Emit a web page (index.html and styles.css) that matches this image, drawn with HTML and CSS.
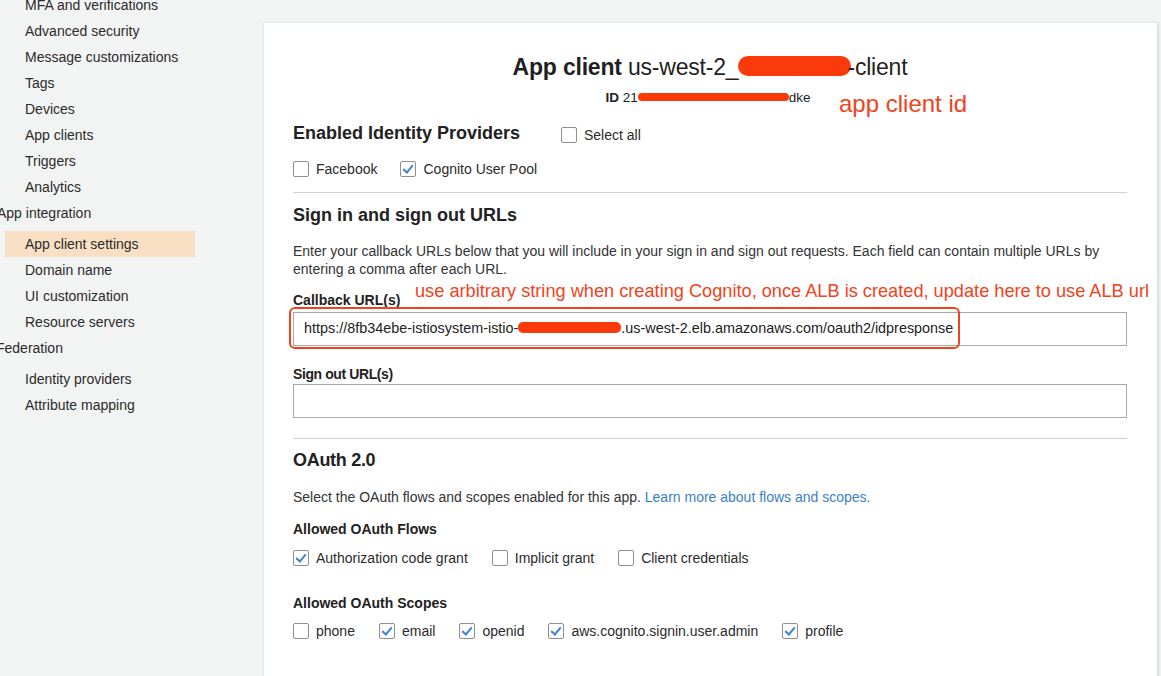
FILE: index.html
```html
<!DOCTYPE html>
<html>
<head>
<meta charset="utf-8">
<link rel="stylesheet" href="styles.css">
</head>
<body>
<div class="page">
  <nav class="sidebar">
    <div class="item">MFA and verifications</div>
    <div class="item">Advanced security</div>
    <div class="item">Message customizations</div>
    <div class="item">Tags</div>
    <div class="item">Devices</div>
    <div class="item">App clients</div>
    <div class="item">Triggers</div>
    <div class="item">Analytics</div>
    <div class="group">App integration</div>
    <div class="item active">App client settings</div>
    <div class="item">Domain name</div>
    <div class="item">UI customization</div>
    <div class="item">Resource servers</div>
    <div class="group fed">Federation</div>
    <div class="item">Identity providers</div>
    <div class="item">Attribute mapping</div>
  </nav>
  <main class="card">
    <h1 class="title"><b>App client</b> us-west-2_<span class="blob title-blob"></span>-client</h1>
    <div class="idline"><b>ID</b> 21<span class="blob id-blob"></span>dke</div>
    <div class="note note-id">app client id</div>

    <div class="providers-head">
      <h2 class="h2">Enabled Identity Providers</h2>
      <label class="cb"><span class="box"></span>Select all</label>
    </div>
    <div class="cbrow">
      <label class="cb"><span class="box"></span>Facebook</label>
      <label class="cb"><span class="box on"></span>Cognito User Pool</label>
    </div>

    <hr class="divider">

    <h2 class="h2 sec">Sign in and sign out URLs</h2>
    <p class="desc">Enter your callback URLs below that you will include in your sign in and sign out requests. Each field can contain multiple URLs by entering a comma after each URL.</p>

    <div class="field first">
      <div class="label">Callback URL(s)</div>
      <div class="note note-cb">use arbitrary string when creating Cognito, once ALB is created, update here to use ALB url</div>
      <div class="input">https://8fb34ebe-istiosystem-istio-<span class="blob url-blob"></span>.us-west-2.elb.amazonaws.com/oauth2/idpresponse</div>
      <div class="ring"></div>
    </div>
    <div class="field second">
      <div class="label narrow">Sign out URL(s)</div>
      <div class="input"></div>
    </div>

    <hr class="divider d2">

    <h2 class="h2 sec2">OAuth 2.0</h2>
    <p class="desc d-oauth">Select the OAuth flows and scopes enabled for this app. <a class="link">Learn more about flows and scopes.</a></p>

    <div class="label sub">Allowed OAuth Flows</div>
    <div class="cbrow flows">
      <label class="cb"><span class="box on"></span>Authorization code grant</label>
      <label class="cb"><span class="box"></span>Implicit grant</label>
      <label class="cb"><span class="box"></span>Client credentials</label>
    </div>

    <div class="label sub sub2">Allowed OAuth Scopes</div>
    <div class="cbrow scopes">
      <label class="cb"><span class="box"></span>phone</label>
      <label class="cb"><span class="box on"></span>email</label>
      <label class="cb"><span class="box on"></span>openid</label>
      <label class="cb"><span class="box on"></span>aws.cognito.signin.user.admin</label>
      <label class="cb"><span class="box on"></span>profile</label>
    </div>
  </main>
</div>
</body>
</html>
```
FILE: styles.css
```css
html, body {
  margin: 0;
  padding: 0;
  height: 100%;
  overflow: hidden;
}
body {
  background: #f2f3f3;
  font-family: "Liberation Sans", Arial, Helvetica, sans-serif;
  color: #222;
}
.page {
  display: flex;
  align-items: flex-start;
  width: 1161px;
}
.sidebar {
  width: 263px;
  flex: none;
  margin-top: -8px;
  font-size: 14px;
  color: #2b2b2b;
}
.item {
  height: 26px;
  line-height: 26px;
  padding-left: 25px;
  white-space: nowrap;
}
.item.active {
  background: #f9e0c4;
  margin-left: 5px;
  width: 170px;
  padding-left: 20px;
  margin-top: 5px;
}
.group {
  height: 26px;
  line-height: 26px;
  margin-left: -3px;
  white-space: nowrap;
}
.group.fed {
  margin-left: -4px;
  height: 31px;
  line-height: 26px;
}
.card {
  position: relative;
  width: 834px;
  flex: none;
  margin-top: 22px;
  height: 700px;
  background: #fff;
  border-left: 1px solid #e6e7e7;
  border-top: 1px solid #e6e7e7;
  box-shadow: 3px 0 2px -1px #dcdcdc;
  padding: 29px 30px 0 29px;
  font-size: 14px;
  color: #222;
}
.title {
  margin: 0;
  text-align: center;
  font-size: 23px;
  line-height: 30px;
  font-weight: normal;
  color: #1f1f1f;
  letter-spacing: -0.2px;
}
.title b {
  font-weight: bold;
}
.blob {
  display: inline-block;
  background: #fb3a0c;
  border-radius: 10px;
}
.title-blob {
  width: 113px;
  height: 20px;
  vertical-align: -1px;
  margin-right: -4px;
}
.idline {
  margin-top: 7px;
  text-align: center;
  font-size: 13.5px;
  line-height: 18px;
  padding-right: 4px;
}
.id-blob {
  width: 151px;
  height: 8px;
  vertical-align: 1px;
  border-radius: 4px;
}
.note {
  position: absolute;
  color: #f0431c;
  white-space: nowrap;
}
.note-id {
  left: 575px;
  top: 66px;
  font-size: 24px;
  line-height: 30px;
}
.providers-head {
  display: flex;
  align-items: center;
  margin-top: 14px;
  height: 24px;
}
.h2 {
  margin: 0;
  font-size: 18px;
  line-height: 24px;
  font-weight: bold;
  color: #222;
}
.providers-head .h2 {
  width: 268px;
}
.cbrow {
  display: flex;
  align-items: center;
  height: 20px;
  margin-top: 14px;
}
.cb {
  display: inline-flex;
  align-items: center;
  font-size: 14px;
  color: #2b2b2b;
  white-space: nowrap;
}
.providers-head .cb {
  margin-top: 4px;
}
.box {
  width: 14px;
  height: 14px;
  border: 1px solid #8e8e8e;
  border-radius: 2px;
  background: #fff;
  margin-right: 7px;
  position: relative;
  flex: none;
}
.box.on::after {
  content: "";
  position: absolute;
  left: 4px;
  top: 1px;
  width: 4px;
  height: 8px;
  border-right: 2.5px solid #3d86c6;
  border-bottom: 2.5px solid #3d86c6;
  transform: rotate(40deg);
}
.cbrow > .cb + .cb {
  margin-left: 23px;
}
.divider {
  border: 0;
  border-top: 1px solid #cfcfcf;
  margin: 13px 0 0 0;
}
.sec {
  margin-top: 10px;
}
.desc {
  margin: 15px 0 0 0;
  line-height: 18px;
  color: #333;
  font-size: 14px;
}
.field {
  position: relative;
}
.field.first {
  margin-top: 13px;
}
.field.first .input {
  margin-top: 3px;
}
.field.second {
  margin-top: 19px;
}
.field.second .input {
  margin-top: 1px;
}
.label {
  font-weight: bold;
  font-size: 14px;
  line-height: 18px;
  color: #222;
}
.label.narrow {
  letter-spacing: -0.4px;
}
.note-cb {
  left: 122px;
  top: -11px;
  font-size: 18.2px;
  line-height: 22px;
}
.input {
  border: 1px solid #a9a9a9;
  box-sizing: border-box;
  height: 34px;
  line-height: 31px;
  padding-left: 10px;
  font-size: 14.4px;
  color: #222;
  white-space: nowrap;
  overflow: hidden;
}
.url-blob {
  width: 103px;
  height: 11px;
  vertical-align: 0px;
  border-radius: 5px;
}
.ring {
  position: absolute;
  left: -4px;
  top: 16px;
  width: 667px;
  height: 38px;
  border: 2.5px solid #f0431c;
  border-radius: 6px;
  pointer-events: none;
}
.d2 {
  margin-top: 20px;
}
.sec2 {
  margin-top: 9px;
  letter-spacing: -0.3px;
}
.d-oauth {
  margin-top: 16px;
}
.link {
  color: #3b7fc4;
}
.sub {
  margin-top: 14px;
}
.flows {
  margin-top: 10px;
}
.flows > .cb + .cb {
  margin-left: 24px;
}
.sub2 {
  margin-top: 26px;
}
.scopes {
  margin-top: 9px;
}
.scopes > .cb + .cb {
  margin-left: 24px;
}
```
